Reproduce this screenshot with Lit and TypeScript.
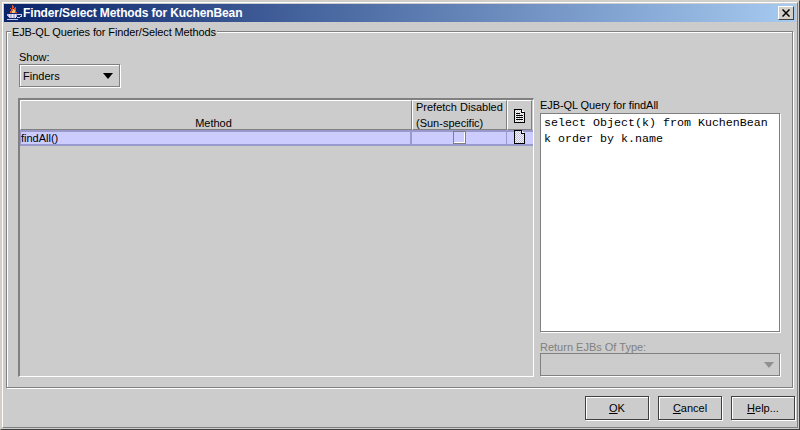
import { LitElement, html, css, svg } from "lit";
import { customElement } from "lit/decorators.js";

const steam = svg`<svg width="16" height="16" viewBox="0 0 16 16" shape-rendering="crispEdges">
  <path d="M6 0 L8 2 L7 4 L10 2 L10 6 L11 8 L4 8 L5 5 L4 3 L6 4 Z" fill="#e0562a"/>
  <path d="M7 4 L9 5 L9 8 L6 8 Z" fill="#f4c078"/>
  <path d="M1 9 H12 L11 12 L9 13 H4 L2 12 Z" fill="#b8b8e0"/>
  <path d="M3 9 V12 M6 9 V13 M9 9 V13" stroke="#e8e8f8" fill="none"/>
  <path d="M12 9.5 H15 V11.5 L11 13" fill="none" stroke="#d0d0f0"/>
  <path d="M1 14.5 H12" stroke="#c8c8e8"/>
</svg>`;

const headerDoc = svg`<svg width="11" height="14" viewBox="0 0 11 14" shape-rendering="crispEdges">
  <defs><pattern id="dh" width="2" height="2" patternUnits="userSpaceOnUse">
    <rect width="2" height="2" fill="#fff"/><rect width="1" height="1" fill="#ccc"/><rect x="1" y="1" width="1" height="1" fill="#ccc"/>
  </pattern></defs>
  <path d="M.5 .5 H7.5 L10.5 3.5 V13.5 H.5 Z" fill="url(#dh)" stroke="#000"/>
  <path d="M7.5 .5 V3.5 H10.5" fill="#fff" stroke="#000"/>
  <path d="M2 4.5 H6 M2 6.5 H9 M2 8.5 H9 M2 10.5 H9" stroke="#000"/>
</svg>`;

const rowDoc = svg`<svg width="11" height="14" viewBox="0 0 11 14" shape-rendering="crispEdges">
  <defs><pattern id="dr" width="2" height="2" patternUnits="userSpaceOnUse">
    <rect width="2" height="2" fill="#f4f4ff"/><rect width="1" height="1" fill="#c0c0dc"/><rect x="1" y="1" width="1" height="1" fill="#c0c0dc"/>
  </pattern></defs>
  <path d="M.5 .5 H7.5 L10.5 3.5 V13.5 H.5 Z" fill="url(#dr)" stroke="#000"/>
  <path d="M7.5 .5 V3.5 H10.5" fill="#fff" stroke="#000"/>
</svg>`;

@customElement("app-root")
export class AppRoot extends LitElement {
  static styles = css`
    :host {
      display: block;
      width: 800px;
      height: 430px;
      font-family: "Liberation Sans", Arial, sans-serif;
      font-size: 11px;
      color: #000;
    }
    * { box-sizing: border-box; }
    .window {
      width: 800px;
      height: 430px;
      background: #ccc;
      border-style: solid;
      border-width: 1px;
      border-color: #d4d0c8 #404040 #404040 #d4d0c8;
      padding: 1px;
      display: flex;
      flex-direction: column;
    }
    .inner {
      flex: 1;
      min-height: 0;
      border-style: solid;
      border-width: 1px;
      border-color: #fff #808080 #808080 #fff;
      padding: 1px;
      display: flex;
      flex-direction: column;
    }
    .title {
      height: 18px;
      flex: none;
      display: flex;
      align-items: center;
      padding: 0 2px;
      gap: 1px;
      color: #fff;
      font-weight: bold;
      font-size: 12px;
      letter-spacing: -0.13px;
      background: linear-gradient(90deg, #0a246a, #a6caf0);
    }
    .title .text { flex: 1; }
    .close {
      width: 16px;
      height: 14px;
      background: #d4d0c8;
      border-style: solid;
      border-width: 1px;
      border-color: #fff #404040 #404040 #fff;
      display: flex;
      align-items: center;
      justify-content: center;
    }
    .body {
      flex: 1;
      min-height: 0;
      display: flex;
      flex-direction: column;
      padding: 9px 1px 0 2px;
    }
    .group {
      height: 357px;
      flex: none;
      margin-right: 2px;
      border: 1px solid #808080;
      box-shadow: 1px 1px 0 #fff, inset 1px 1px 0 #fff;
      padding: 19px 12px 0 12px;
      display: flex;
      flex-direction: column;
      position: relative;
    }
    .legend {
      position: absolute;
      left: 4px;
      top: -6px;
      background: #ccc;
      padding: 0 1px;
      line-height: 13px;
      white-space: nowrap;
      letter-spacing: -0.12px;
    }
    .show-label { line-height: 13px; height: 13px; }
    .combo {
      width: 101px;
      height: 23px;
      flex: none;
      border: 1px solid #808080;
      box-shadow: 1px 1px 0 #fff, inset 1px 1px 0 #fff;
      display: flex;
      align-items: center;
      justify-content: space-between;
      padding: 0 6px 0 3px;
    }
    .arrow {
      width: 0;
      height: 0;
      border-left: 5.5px solid transparent;
      border-right: 5.5px solid transparent;
      border-top: 6px solid #000;
    }
    .main {
      display: flex;
      margin-top: 11px;
      margin-left: -1px;
      gap: 6px;
      flex: none;
      align-items: flex-start;
    }
    .table {
      width: 516px;
      height: 279px;
      flex: none;
      border-style: solid;
      border-width: 2px 1px 1px 2px;
      border-color: #808080 #fff #fff #808080;
      display: flex;
      flex-direction: column;
    }
    .thead, .trow { display: flex; flex: none; }
    .th {
      height: 30px;
      border-top: 1px solid #fff;
      border-left: 1px solid #fff;
      border-right: 1px solid #808080;
      border-bottom: 1px solid #808080;
      line-height: 16px;
      display: flex;
      flex-direction: column;
      justify-content: flex-end;
      align-items: center;
    }
    .th span:last-child { margin-bottom: -2px; }
    .c1 { width: 392px; }
    .th.c1 { padding-right: 5px; }
    .c2 { width: 95px; }
    .th.c2 { align-items: flex-start; padding-left: 3px; }
    .c3 { width: 25px; }
    .th.c3 { justify-content: center; padding-top: 2px; }
    .trow {
      height: 16px;
      background: #ccf;
      border-top: 2px solid #99c;
      border-bottom: 2px solid #99c;
    }
    .td {
      height: 12px;
      display: flex;
      align-items: center;
      justify-content: center;
      border-right: 1px solid #99c;
    }
    .td.c1 {
      justify-content: flex-start;
      border-left: 1px solid #99c;
      border-right: 2px solid #99c;
    }
    .td.c3 { border-right: 0; align-items: flex-start; }
    .check {
      width: 13px;
      height: 13px;
      flex: none;
      margin-bottom: 2px;
      background: #ccf;
      border-style: solid;
      border-width: 1px;
      border-color: #808080 #fff #fff #808080;
      outline: 1px solid #808080;
      outline-offset: -1px;
      box-shadow: inset -1px -1px 0 #fff;
    }
    .td.c3 svg { margin-top: -2px; }
    .side {
      width: 240px;
      flex: none;
      display: flex;
      flex-direction: column;
    }
    .q-label { line-height: 13px; height: 15px; padding-top: 1px; letter-spacing: -0.08px; }
    .query {
      height: 219px;
      flex: none;
      background: #fff;
      border: 1px solid #808080;
      box-shadow: 1px 1px 0 #fff;
      font-family: "Liberation Mono", "Courier New", monospace;
      font-size: 11.67px;
      line-height: 16px;
      padding: 1px 3px 0 3px;
    }
    .r-label { color: #808080; line-height: 13px; margin-top: 9px; height: 12px; }
    .combo.off {
      width: 240px;
      box-shadow: 1px 1px 0 #fff;
      justify-content: flex-end;
      padding-right: 5px;
    }
    .combo.off .arrow { border-top-color: #909090; }
    .footer {
      display: flex;
      justify-content: flex-end;
      gap: 9px;
      padding-top: 8px;
    }
    .btn {
      width: 64px;
      height: 24px;
      border-style: solid;
      border-width: 1px;
      border-color: #404040;
      box-shadow: inset 1px 1px 0 #fff, 1px 1px 0 #fff;
      display: flex;
      align-items: center;
      justify-content: center;
    }
    .btn u { text-underline-offset: 1px; }
  `;

  render() {
    return html`
      <div class="window">
        <div class="inner">
          <div class="title">
            ${steam}
            <span class="text">Finder/Select Methods for KuchenBean</span>
            <span class="close">
              <svg width="8" height="8" viewBox="0 0 8 8"><path d="M.5 .5 L7.5 7.5 M7.5 .5 L.5 7.5" stroke="#000" stroke-width="1.5" /></svg>
            </span>
          </div>
          <div class="body">
            <div class="group">
              <div class="legend">EJB-QL Queries for Finder/Select Methods</div>
              <div class="show-label">Show:</div>
              <div class="combo"><span>Finders</span><span class="arrow"></span></div>
              <div class="main">
                <div class="table">
                  <div class="thead">
                    <div class="th c1"><span>Method</span></div>
                    <div class="th c2"><span>Prefetch Disabled</span><span>(Sun-specific)</span></div>
                    <div class="th c3">${headerDoc}</div>
                  </div>
                  <div class="trow">
                    <div class="td c1">findAll()</div>
                    <div class="td c2"><span class="check"></span></div>
                    <div class="td c3">${rowDoc}</div>
                  </div>
                </div>
                <div class="side">
                  <div class="q-label">EJB-QL Query for findAll</div>
                  <div class="query">select Object(k) from KuchenBean k order by k.name</div>
                  <div class="r-label">Return EJBs Of Type:</div>
                  <div class="combo off"><span class="arrow"></span></div>
                </div>
              </div>
            </div>
            <div class="footer">
              <div class="btn"><span><u>O</u>K</span></div>
              <div class="btn"><span><u>C</u>ancel</span></div>
              <div class="btn"><span><u>H</u>elp...</span></div>
            </div>
          </div>
        </div>
      </div>
    `;
  }
}
